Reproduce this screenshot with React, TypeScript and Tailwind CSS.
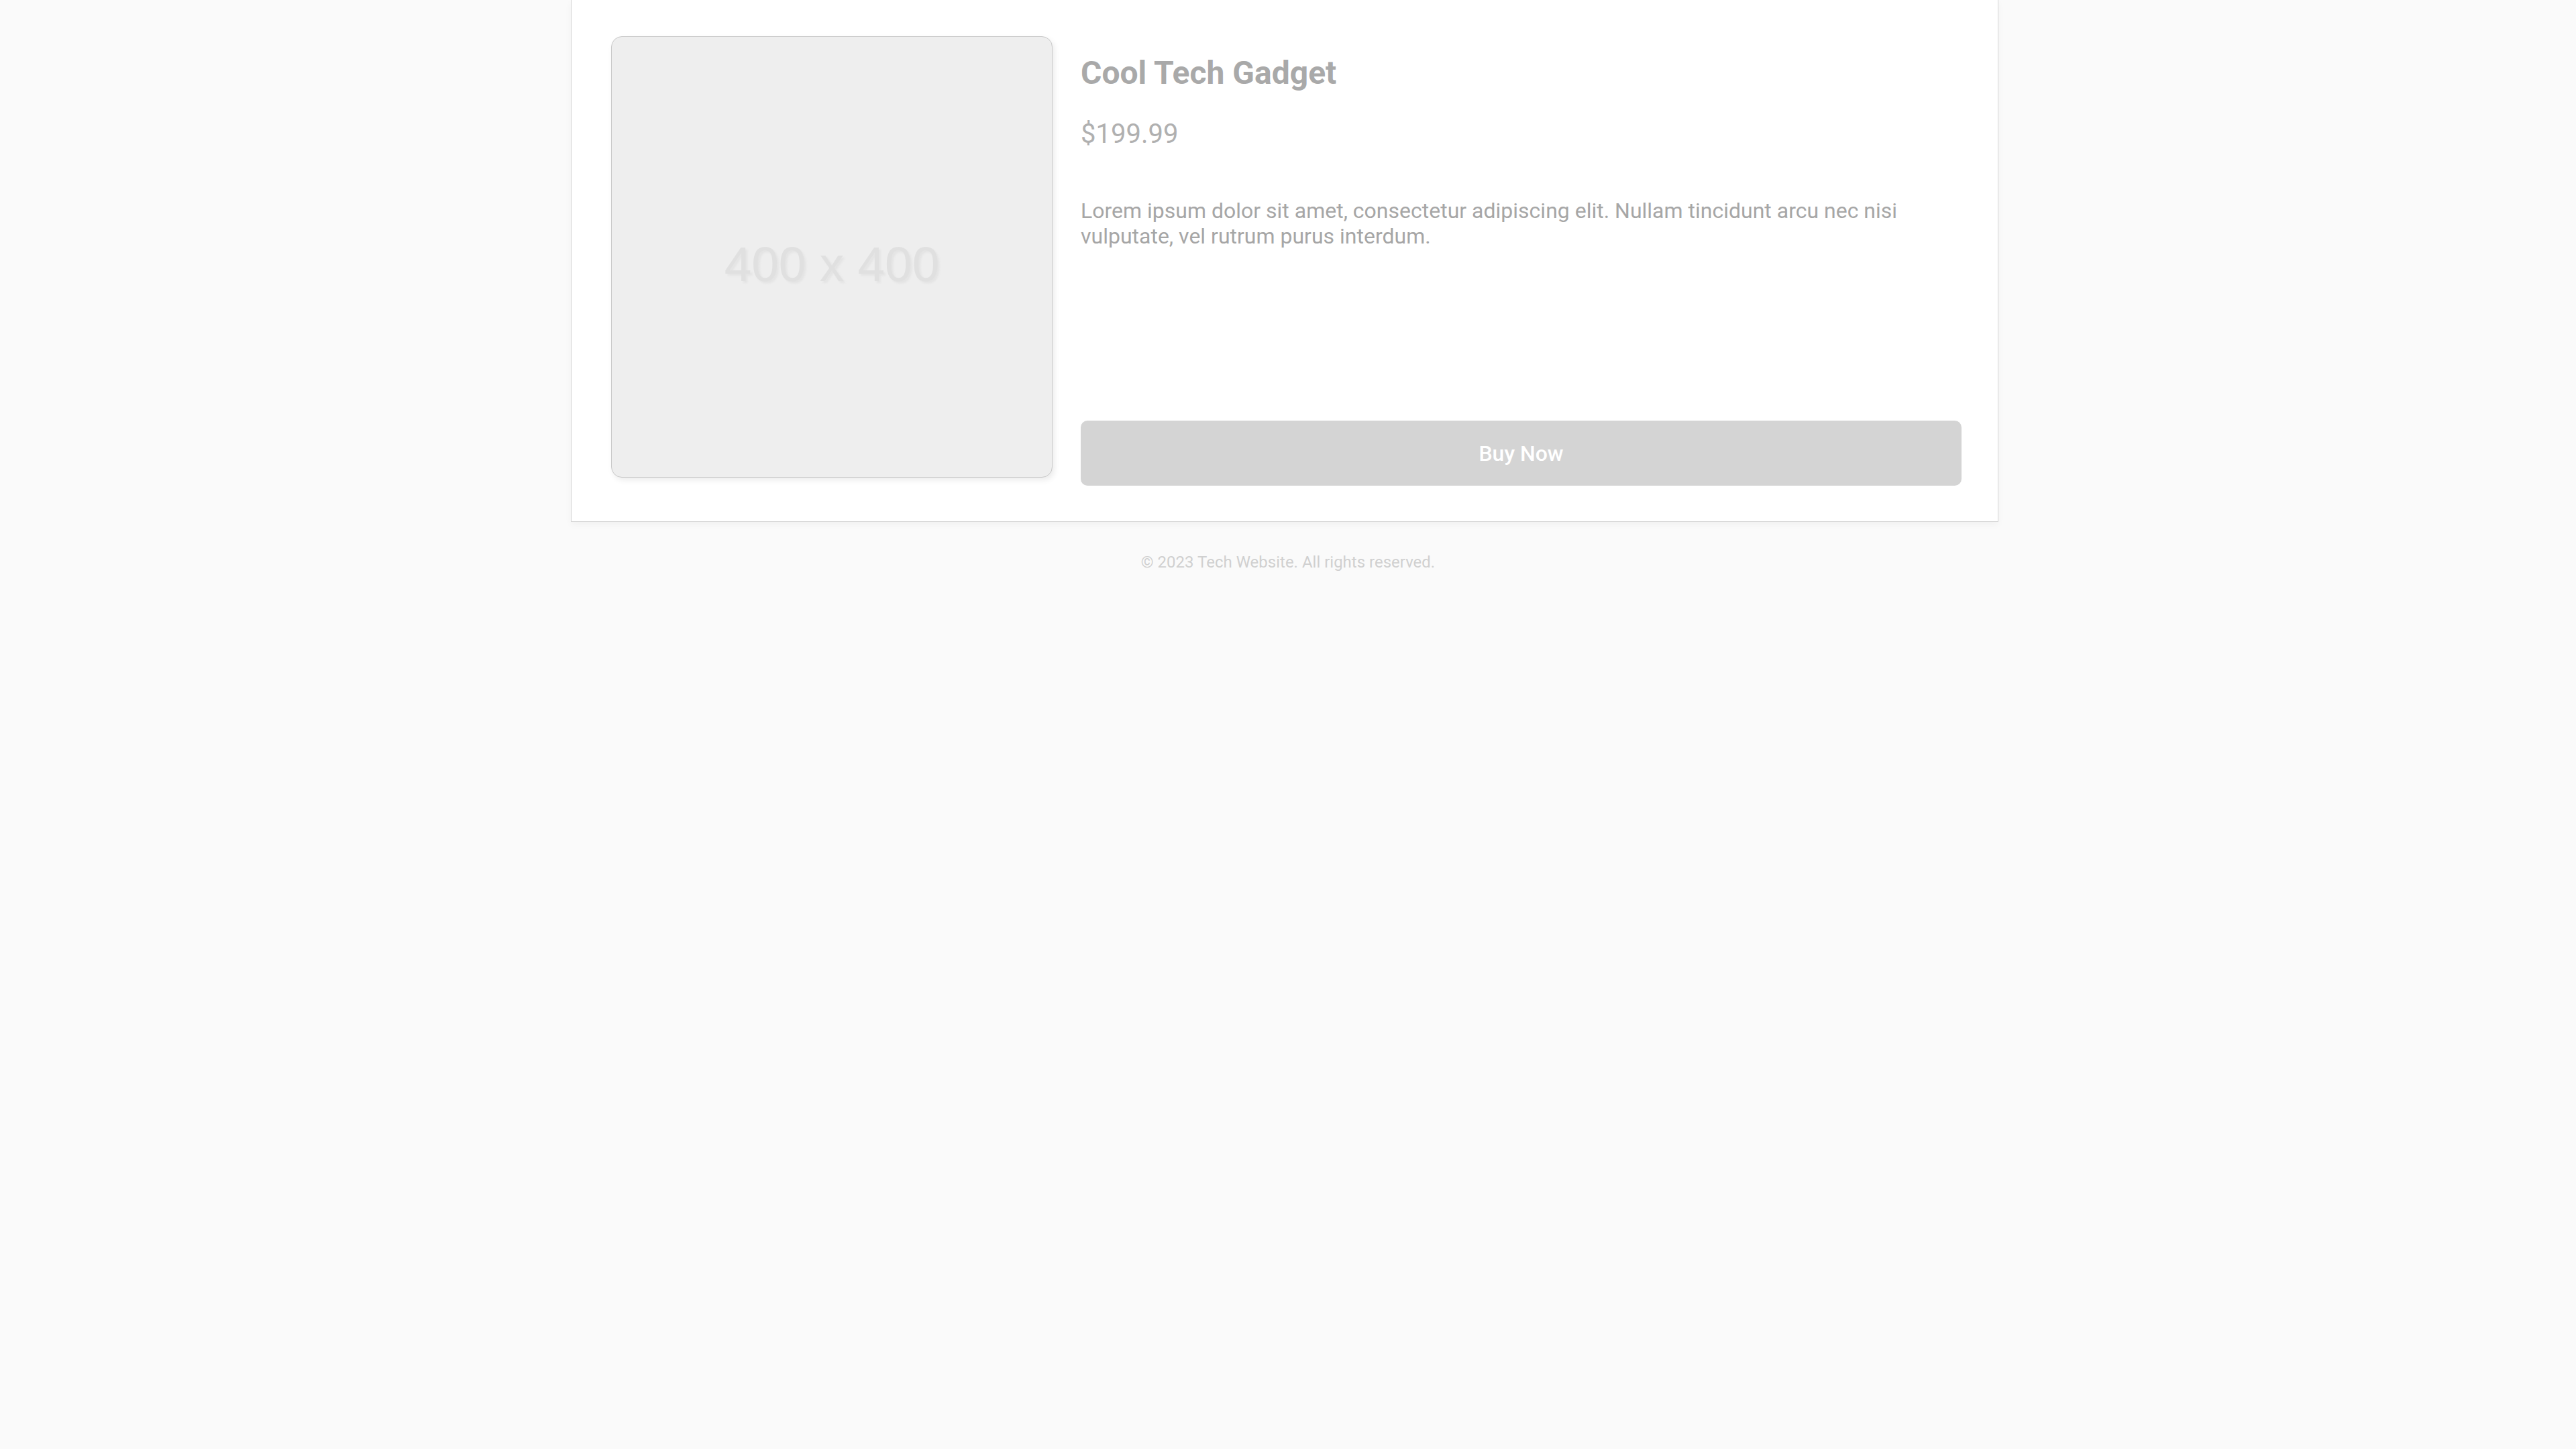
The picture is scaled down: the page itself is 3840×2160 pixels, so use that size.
import React from 'react';

const product = {
  name: 'Cool Tech Gadget',
  price: '$199.99',
  desc: 'Lorem ipsum dolor sit amet, consectetur adipiscing elit. Nullam tincidunt arcu nec nisi vulputate, vel rutrum purus interdum.',
};

const ImagePlaceholder: React.FC = () => (
  <div className="w-[658px] h-[658px] shrink-0 rounded-[16px] border border-[#c9c9c9] bg-[#eeeeee] shadow-[3px_4px_8px_rgba(0,0,0,0.08)] flex items-center justify-center">
    <span className="mt-[22px] text-[73px] text-[#e0e0e0] [text-shadow:3px_3px_3px_#e4e4e4] font-['Liberation_Sans',Arial,sans-serif]">
      400 x 400
    </span>
  </div>
);

export default function App() {
  return (
    <div className="min-h-screen bg-[#fafafa] font-['Roboto',sans-serif]">
      <div className="ml-[851px] w-[2128px] bg-white border-x border-b border-[#d6d6d6] shadow-[0_4px_10px_rgba(0,0,0,0.04)] pt-[54px] pb-[53px] pl-[59px] pr-[54px]">
        <div className="flex gap-[42px]">
          <ImagePlaceholder />
          <div className="flex-1 flex flex-col h-[670px]">
            <h1 className="mt-[26px] text-[48px] leading-[1.2] font-bold text-[#a9a9a9]">{product.name}</h1>
            <p className="mt-[32px] text-[40px] leading-[60px] text-[#b0b0b0]">{product.price}</p>
            <p className="mt-[65px] text-[32px] leading-[38px] text-[#a6a6a6]">{product.desc}</p>
            <button className="mt-auto h-[97px] w-full rounded-[10px] bg-[#d4d4d4] text-white text-[32px] font-medium">
              Buy Now
            </button>
          </div>
        </div>
      </div>
      <footer className="pt-[42px] text-center text-[24px] text-[#d0d0d0]">
        © 2023 Tech Website. All rights reserved.
      </footer>
    </div>
  );
}
